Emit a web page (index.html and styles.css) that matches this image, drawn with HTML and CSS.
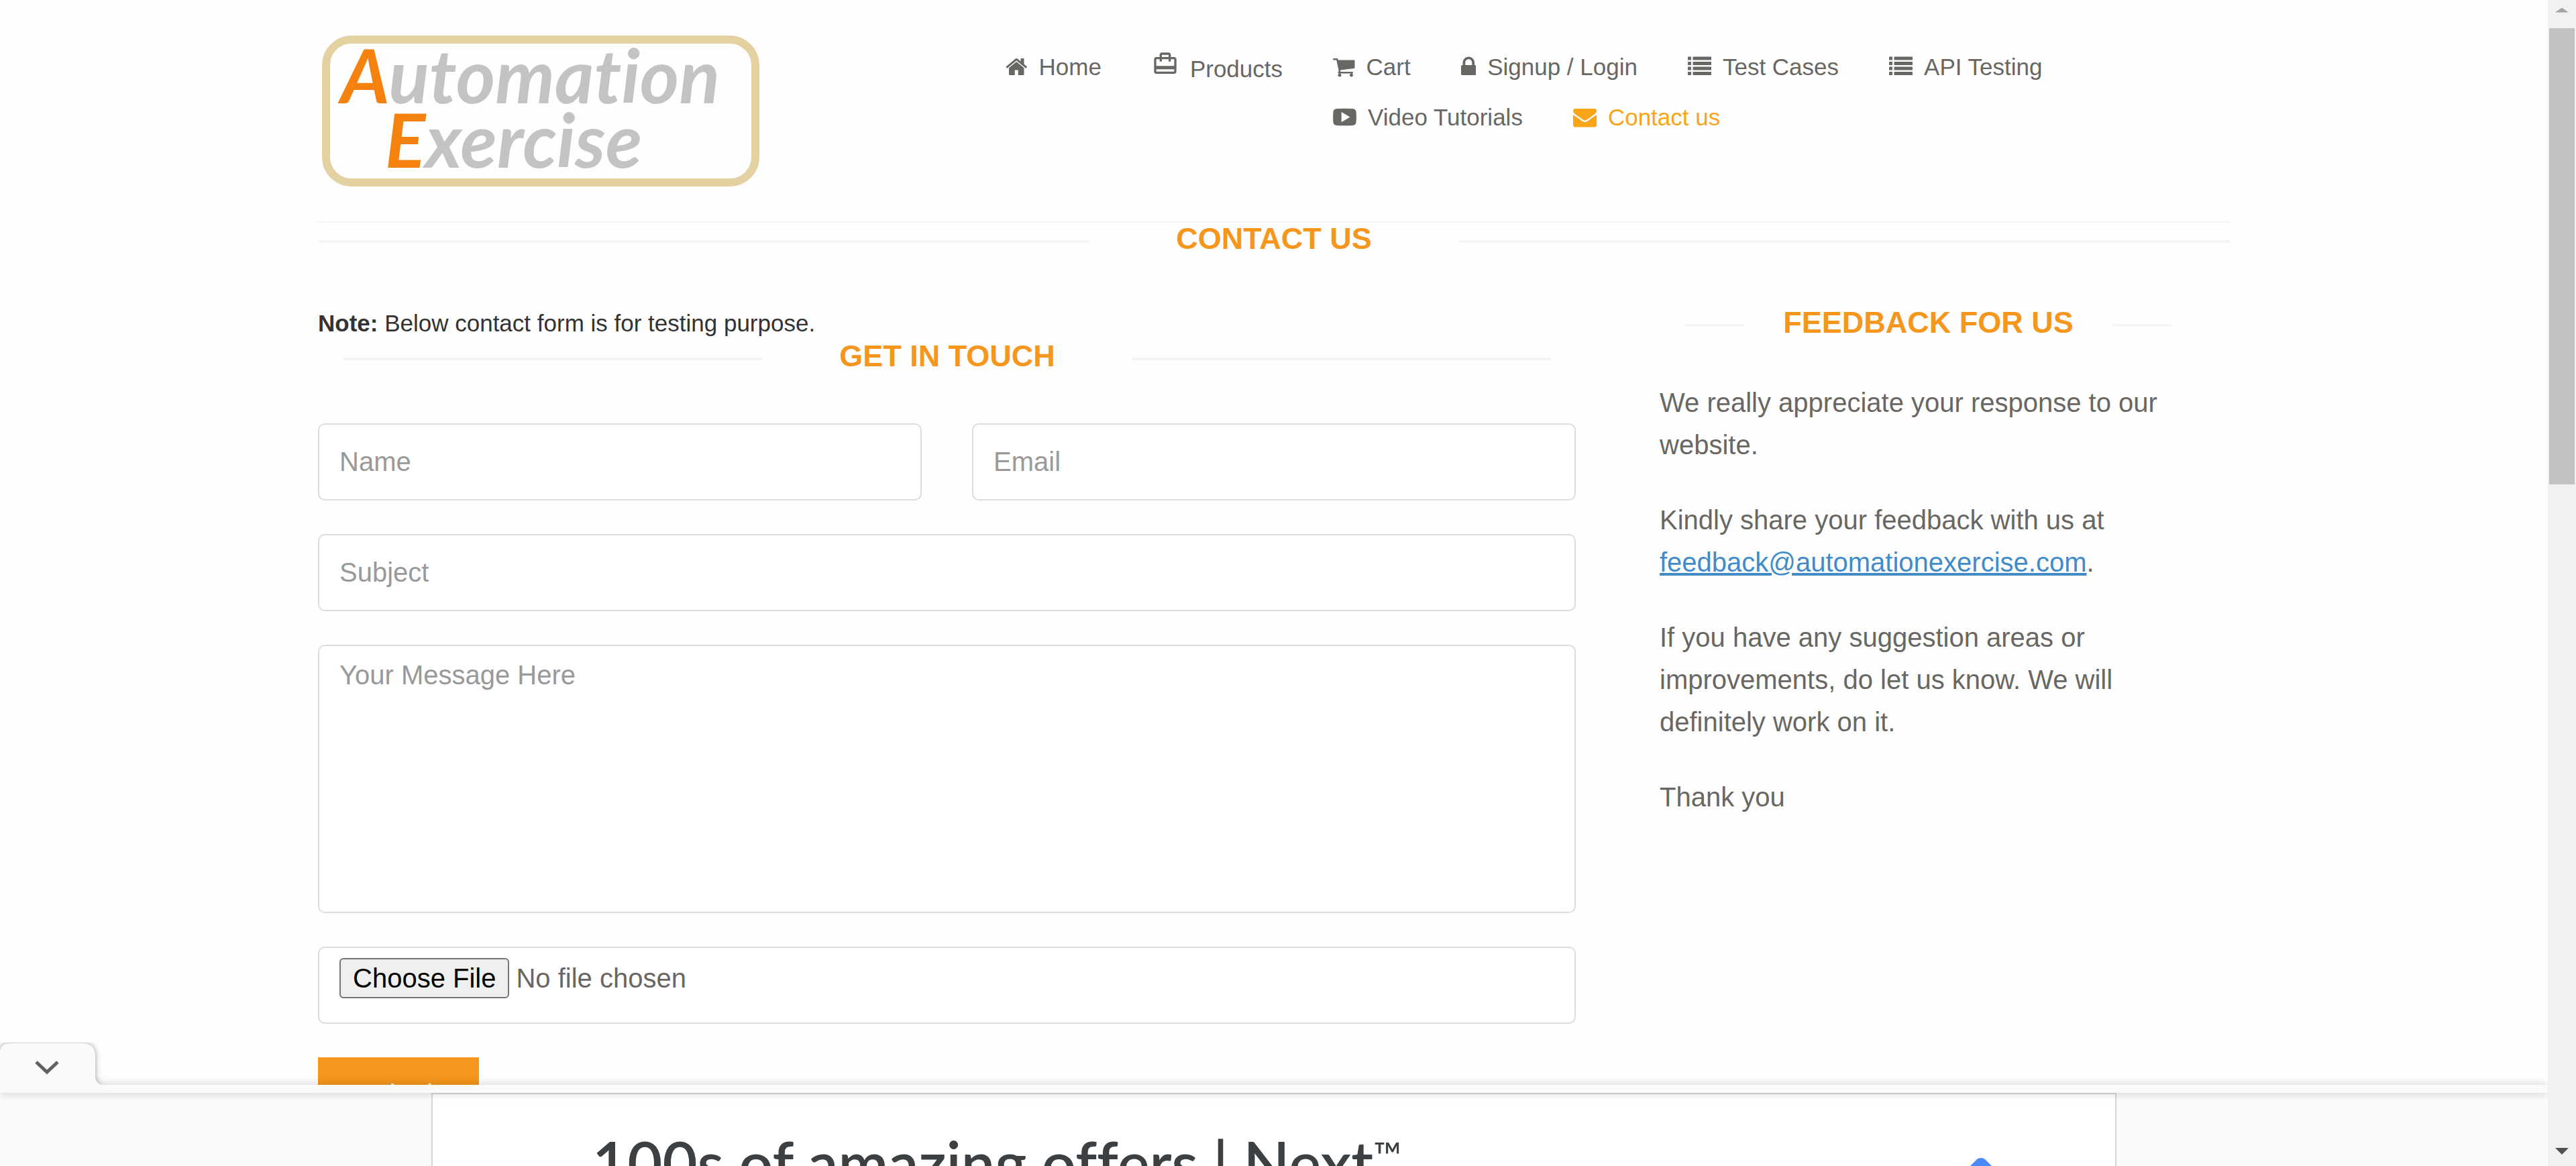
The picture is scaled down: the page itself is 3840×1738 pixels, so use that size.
FILE: index.html
```html
<!DOCTYPE html>
<html lang="en">
<head>
<meta charset="utf-8">
<title>Automation Exercise - Contact Us</title>
<link rel="stylesheet" href="styles.css">
</head>
<body>
<div class="viewport">
  <div class="page">
    <div class="container">
      <header class="header">
        <a class="logo" href="#" aria-label="Automation Exercise">
          <svg width="660" height="232" viewBox="0 0 660 232">
            <rect x="12" y="9" width="640" height="213" rx="38" fill="none" stroke="#e4d1a2" stroke-width="12"/>
            <text class="logo-text" x="34" y="104"><tspan class="logo-cap">A</tspan>utomation</text>
            <text class="logo-text" x="100" y="200"><tspan class="logo-cap">E</tspan>xercise</text>
          </svg>
        </a>
        <nav class="menu">
          <ul class="menu-list">
            <li><a href="#"><svg class="fa" viewBox="64 0 1664 1792"><path d="M1472 992v480q0 26-19 45t-45 19h-384v-384h-256v384h-384q-26 0-45-19t-19-45v-480q0-1 .5-3t.5-3l575-474 575 474q1 2 1 6zm223-69l-62 74q-8 9-21 11h-3q-13 0-21-7l-692-577-692 577q-12 8-24 7-13-2-21-11l-62-74q-8-10-7-23.5t11-21.5l719-599q32-26 76-26t76 26l244 204v-195q0-14 9-23t23-9h192q14 0 23 9t9 23v408l219 182q10 8 11 21.5t-7 23.5z"/></svg>Home</a></li>
            <li><a href="#"><svg class="material" viewBox="0 0 24 24"><path d="M20 6h-3V4c0-1.11-.89-2-2-2H9c-1.11 0-2 .89-2 2v2H4c-1.11 0-2 .89-2 2v11c0 1.11.89 2 2 2h16c1.11 0 2-.89 2-2V8c0-1.11-.89-2-2-2zM9 4h6v2H9V4zm11 15H4v-2h16v2zm0-5H4V8h3v2h2V8h6v2h2V8h3v6z"/></svg>Products</a></li>
            <li><a href="#"><svg class="fa" viewBox="64 0 1664 1792"><path d="M704 1536q0 52-38 90t-90 38-90-38-38-90 38-90 90-38 90 38 38 90zm896 0q0 52-38 90t-90 38-90-38-38-90 38-90 90-38 90 38 38 90zm128-1088v512q0 24-16.500 42.500t-40.500 21.500l-1044 122q13 60 13 70 0 16-24 64h920q26 0 45 19t19 45-19 45-45 19h-1024q-26 0-45-19t-19-45q0-11 8-31.500t16-36 21.500-40 15.500-29.500l-177-823h-204q-26 0-45-19t-19-45 19-45 45-19h256q16 0 28.500 6.500t19.500 15.500 13 24.500 8 26 5.500 29.500 4.500 26h1201q26 0 45 19t19 45z"/></svg>Cart</a></li>
            <li><a href="#"><svg class="fa" viewBox="320 0 1152 1792"><path d="M640 768h512v-192q0-106-75-181t-181-75-181 75-75 181v192zm832 96v576q0 40-28 68t-68 28h-960q-40 0-68-28t-28-68v-576q0-40 28-68t68-28h32v-192q0-184 132-316t316-132 316 132 132 316v192h32q40 0 68 28t28 68z"/></svg>Signup / Login</a></li>
            <li><a href="#"><svg class="fa" viewBox="0 0 1792 1792"><path d="M32 128h192q32 0 32 32v192q0 32-32 32H32q-32 0-32-32V160q0-32 32-32zm384 0h1344q32 0 32 32v192q0 32-32 32H416q-32 0-32-32V160q0-32 32-32zM32 512h192q32 0 32 32v192q0 32-32 32H32q-32 0-32-32V544q0-32 32-32zm384 0h1344q32 0 32 32v192q0 32-32 32H416q-32 0-32-32V544q0-32 32-32zM32 896h192q32 0 32 32v192q0 32-32 32H32q-32 0-32-32V928q0-32 32-32zm384 0h1344q32 0 32 32v192q0 32-32 32H416q-32 0-32-32V928q0-32 32-32zM32 1280h192q32 0 32 32v192q0 32-32 32H32q-32 0-32-32v-192q0-32 32-32zm384 0h1344q32 0 32 32v192q0 32-32 32H416q-32 0-32-32v-192q0-32 32-32z"/></svg>Test Cases</a></li>
            <li><a href="#"><svg class="fa" viewBox="0 0 1792 1792"><path d="M32 128h192q32 0 32 32v192q0 32-32 32H32q-32 0-32-32V160q0-32 32-32zm384 0h1344q32 0 32 32v192q0 32-32 32H416q-32 0-32-32V160q0-32 32-32zM32 512h192q32 0 32 32v192q0 32-32 32H32q-32 0-32-32V544q0-32 32-32zm384 0h1344q32 0 32 32v192q0 32-32 32H416q-32 0-32-32V544q0-32 32-32zM32 896h192q32 0 32 32v192q0 32-32 32H32q-32 0-32-32V928q0-32 32-32zm384 0h1344q32 0 32 32v192q0 32-32 32H416q-32 0-32-32V928q0-32 32-32zM32 1280h192q32 0 32 32v192q0 32-32 32H32q-32 0-32-32v-192q0-32 32-32zm384 0h1344q32 0 32 32v192q0 32-32 32H416q-32 0-32-32v-192q0-32 32-32z"/></svg>API Testing</a></li>
            <li><a href="#"><svg class="fa" viewBox="0 0 1792 1792"><path fill-rule="evenodd" d="M300 256Q896 236 1492 256Q1740 270 1770 500Q1800 896 1770 1292Q1740 1522 1492 1536Q896 1556 300 1536Q52 1522 22 1292Q-8 896 22 500Q52 270 300 256zM680 520q-32-16-32 24v704q0 40 32 24l580-352q28-24 0-48z"/></svg>Video Tutorials</a></li>
            <li><a class="active" href="#"><svg class="fa" viewBox="0 0 1792 1792"><path d="M1792 710v794q0 66-47 113t-113 47h-1472q-66 0-113-47t-47-113v-794q44 49 101 87 362 246 497 345 57 42 92.500 65.500t94.500 48 110 24.500h2q51 0 110-24.500t94.500-48 92.500-65.500q170-123 498-345 57-39 100-87zm0-294q0 79-49 151t-122 123q-376 261-468 325-10 7-42.500 31t-54 38.500-52 32.500-57.500 27-50 9h-2q-23 0-50-9t-57.500-27-52-32.500-54-38.500-42.500-31q-91-64-262-182.500t-205-142.500q-62-42-117-115.500t-55-136.500q0-78 41.500-130t118.500-52h1472q65 0 112.500 47t47.500 113z"/></svg>Contact us</a></li>
          </ul>
        </nav>
      </header>

      <main>
        <h1 class="title title-page">Contact Us</h1>
        <div class="columns">
          <section>
            <p class="note"><b>Note:</b> Below contact form is for testing purpose.</p>
            <h2 class="title title-form">Get In Touch</h2>
            <form class="form">
              <input class="field" type="text" placeholder="Name" aria-label="Name">
              <input class="field" type="email" placeholder="Email" aria-label="Email">
              <input class="field wide" type="text" placeholder="Subject" aria-label="Subject">
              <textarea class="field wide message" placeholder="Your Message Here" aria-label="Your Message Here"></textarea>
              <input class="field wide file" type="file" aria-label="Upload file">
              <button class="submit" type="button">Submit</button>
            </form>
          </section>
          <aside class="feedback">
            <h2 class="title title-feedback">Feedback For Us</h2>
            <p>We really appreciate your response to our website.</p>
            <p>Kindly share your feedback with us at <a href="#">feedback@automationexercise.com</a>.</p>
            <p>If you have any suggestion areas or improvements, do let us know. We will definitely work on it.</p>
            <p>Thank you</p>
          </aside>
        </div>
      </main>
    </div>

    <div class="ad">
      <button class="ad-toggle" type="button" aria-label="Collapse ad">
        <svg width="160" height="63" viewBox="0 12 160 63">
          <path class="tab" d="M0 76V24Q2 13 16 13H124Q142 14 142 32V60Q142 75 156 76Z"/>
          <path d="M54 41L70 56L86 41" fill="none" stroke="#616161" stroke-width="5"/>
        </svg>
      </button>
      <div class="ad-strip"></div>
      <div class="ad-body">
        <div class="ad-card">
          <div class="ad-title">100s of amazing offers | Next<span class="trademark">™</span></div>
          <svg class="ad-mark" width="120" height="120" viewBox="0 0 120 120"><path d="M60 0q5 0 8 4l52 52H0L52 4q3-4 8-4z" fill="#4c8bf5"/></svg>
        </div>
      </div>
    </div>
  </div>

  <div class="scrollbar" aria-hidden="true">
    <svg width="42" height="29" viewBox="0 0 42 29"><path d="M11 18.500L21 11.500L31 18.500Z" fill="#a3a3a3"/></svg>
    <div class="track"><div class="thumb"></div></div>
    <svg width="42" height="37" viewBox="0 0 42 37"><path d="M11 10H31L21 20Z" fill="#505050"/></svg>
  </div>
</div>
</body>
</html>
```
FILE: styles.css
```css
* { box-sizing: border-box; }
body {
  margin: 0;
  background: #fefefe;
  color: #696763;
  font-family: "Liberation Sans", Arial, sans-serif;
  font-size: 35px;
  line-height: 50px;
}
h1, h2, p, ul { margin: 0; padding: 0; }
.viewport {
  display: flex;
  height: 100vh;
  overflow: hidden;
}
.page {
  position: relative;
  flex: 1;
  min-width: 0;
  overflow: hidden;
}
.container {
  max-width: 2850px;
  margin: 0 auto;
}

/* header */
.header {
  display: grid;
  grid-template-columns: 975px 1fr;
  height: 332px;
  border-bottom: 2px solid #f5f5f5;
}
.logo { padding-top: 50px; }
.logo svg {
  display: block;
  overflow: visible;
}
.logo-text {
  font-family: Lato, sans-serif;
  font-size: 112px;
  font-style: italic;
  font-weight: 700;
  font-variant-ligatures: none;
  fill: #c3c3c3;
}
.logo-cap { fill: #f5820f; }
.menu { padding: 75px 0 0 12px; }
.menu-list { list-style: none; }
.menu-list li {
  float: left;
  padding: 0 37px 25px 38px;
}
.menu-list a {
  display: block;
  color: #696763;
  text-decoration: none;
}
.menu-list a.active { color: #f9a51a; }
.menu-list svg {
  margin-right: 17px;
  fill: currentColor;
}
.fa {
  height: 35px;
  vertical-align: -5px;
}
.material {
  width: 40px;
  height: 40px;
  vertical-align: baseline;
}

/* section titles with a rule on either side */
.title {
  display: grid;
  grid-template-columns: 1fr 550px 1fr;
  align-items: center;
  color: #f6961c;
  font-size: 45px;
  font-weight: 700;
  line-height: 48px;
  text-align: center;
  text-transform: uppercase;
}
.title::before, .title::after {
  content: "";
  height: 4px;
  margin-top: 8px;
  background: #f5f5f5;
}
.title-page { margin-bottom: 77px; }
.title-form { margin: 0 37px 76px 38px; }
.title-feedback { margin: 0 37px 64px 38px; }

.columns {
  display: grid;
  grid-template-columns: 1875px 1fr;
  column-gap: 75px;
}
.note { color: #333; }

/* form */
.form {
  display: grid;
  grid-template-columns: 1fr 1fr;
  gap: 50px 75px;
  align-items: start;
  justify-items: start;
}
.field {
  width: 100%;
  height: 115px;
  padding: 15px 30px;
  border: 2px solid #ddd;
  border-radius: 10px;
  background: #fff;
  color: #696763;
  font: 40px/57px "Liberation Sans", Arial, sans-serif;
}
.field::placeholder { color: #999; opacity: 1; }
.wide { grid-column: 1 / -1; }
.message {
  display: block;
  height: 400px;
  resize: none;
}
.file::file-selector-button {
  height: 60px;
  margin-right: 10px;
  padding: 0 18px;
  border: 2px solid #767676;
  border-radius: 6px;
  background: #efefef;
  color: #000;
  font: 40px/50px "Liberation Sans", Arial, sans-serif;
}
.submit {
  width: 240px;
  padding: 27px 0;
  border: 0;
  background: #f6961c;
  color: #fff;
  font: 40px/57px "Liberation Sans", Arial, sans-serif;
}

/* feedback column */
.feedback {
  padding: 0 50px;
  font-size: 40px;
  line-height: 63px;
}
.feedback p { margin-bottom: 49px; }
.feedback a { color: #428bca; }

/* anchored ad at the bottom of the window */
.ad {
  position: absolute;
  right: 0;
  bottom: 0;
  left: 0;
}
.ad-toggle {
  display: block;
  position: relative;
  z-index: 1;
  height: 63px;
  padding: 0;
  border: 0;
  background: none;
}
.ad-toggle svg { display: block; }
.tab {
  fill: #fafafa;
  filter: drop-shadow(0 0 4px rgba(0, 0, 0, .4));
}
.ad-strip {
  position: relative;
  height: 12px;
  background: #fafafa;
  box-shadow: 0 0 14px rgba(0, 0, 0, .2);
}
.ad-body {
  height: 109px;
  background: #fafafa;
}
.ad-card {
  display: flex;
  justify-content: space-between;
  max-width: 2512px;
  height: 109px;
  margin: 0 auto;
  padding: 0 140px 0 238px;
  overflow: hidden;
  border: 2px solid #d5d7d6;
  border-bottom: 0;
  background: #fff;
}
.ad-title {
  padding-top: 48px;
  color: #3c4043;
  font: 600 90px/106px Lato, sans-serif;
  font-variant-ligatures: none;
  white-space: nowrap;
}
.trademark {
  font-size: 56px;
  font-weight: 400;
  line-height: 60px;
  vertical-align: 24px;
}
.ad-mark { margin-top: 95px; }

/* scrollbar */
.scrollbar {
  display: flex;
  flex-direction: column;
  width: 42px;
  background: #f1f1f1;
}
.scrollbar svg { display: block; }
.track {
  flex: 1;
  margin: 13px 2px 0;
}
.thumb {
  height: 41%;
  background: #c1c1c1;
}
```
